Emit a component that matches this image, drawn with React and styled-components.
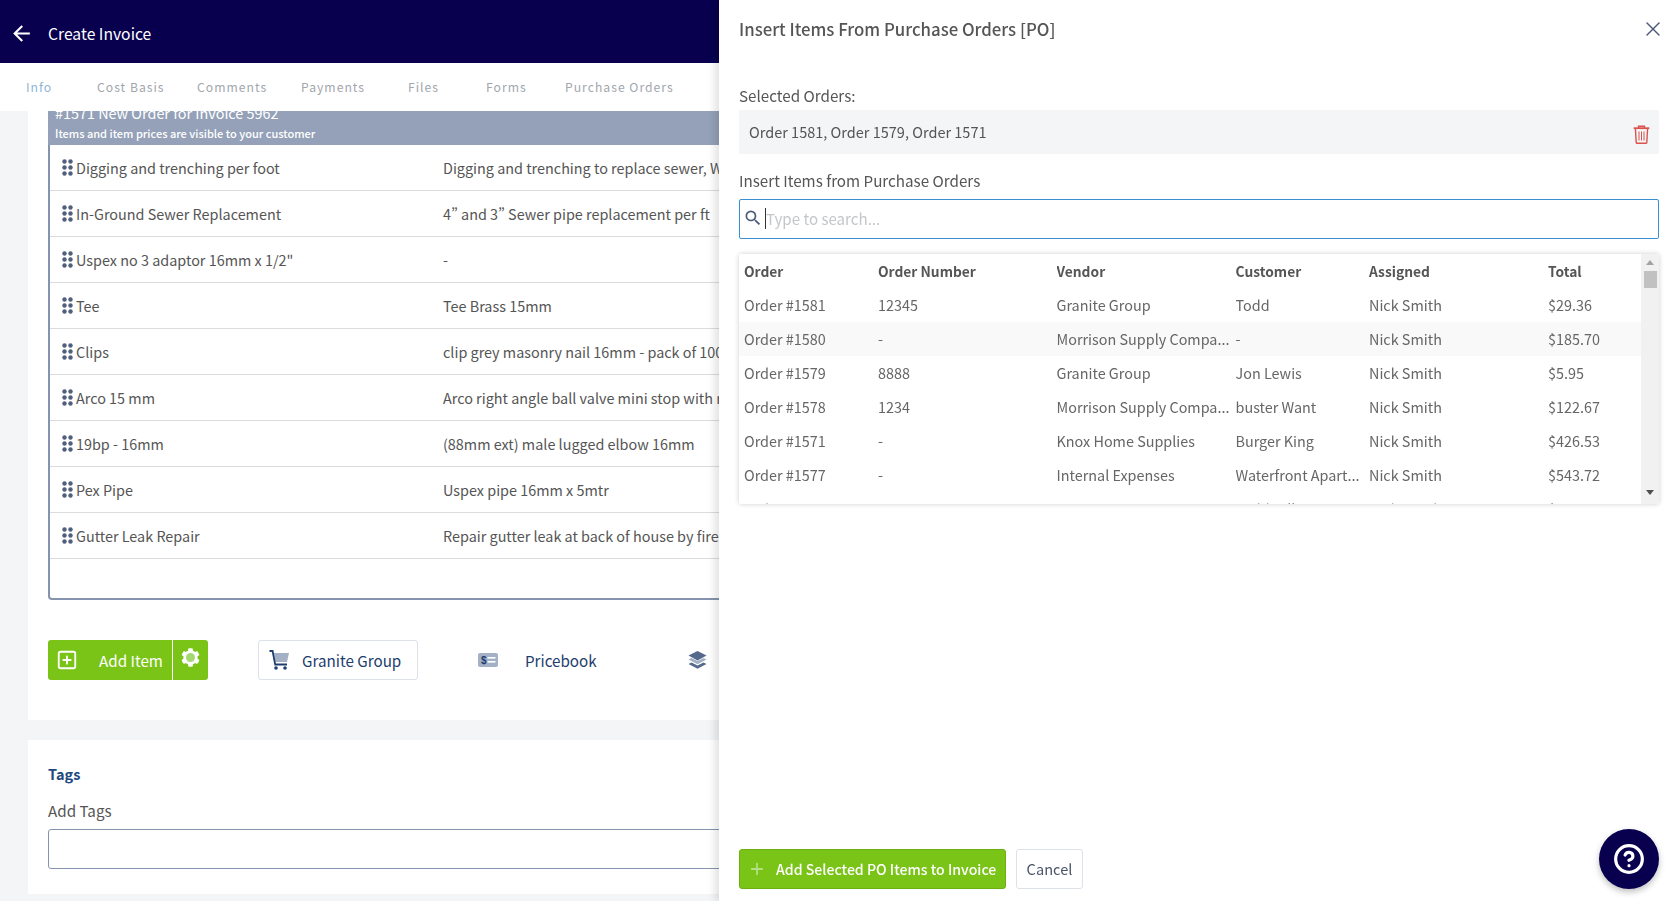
import React from 'react';
import styled, { createGlobalStyle } from 'styled-components';
import { X, CircleHelp, Plus, SquarePlus } from 'lucide-react';
import { FaCog } from 'react-icons/fa';
import { MdArrowBack, MdSearch } from 'react-icons/md';

const GlobalStyle = createGlobalStyle`
    html, body {
        margin: 0;
        height: 100%;
        overflow: hidden;
        background-color: #f4f5f7;
        font-family: "Noto Sans CJK SC", "Source Sans Pro", sans-serif;
        font-feature-settings: "pwid";
        color: #555;
    }
    * { box-sizing: border-box; }
`;

const Page = styled.div`
    height: 901px;
    display: flex;
    flex-direction: column;
    overflow: hidden;
`;

const TopBar = styled.header`
    height: 63px;
    flex: none;
    background-color: #08004e;
    display: flex;
    align-items: center;
    padding: 4px 0 0 9px;
    gap: 14px;
    color: #fff;
    font-size: 15.7px;
    line-height: 24px;
`;

const TabBar = styled.nav`
    height: 48px;
    flex: none;
    background-color: #fff;
    display: flex;
    align-items: center;
    font-size: 12.2px;
    line-height: 18px;
    letter-spacing: 1px;
    position: relative;
    z-index: 1;
`;

const Tab = styled.span`
    width: ${p => p.$w}px;
    padding-left: ${p => p.$pad}px;
    color: ${p => (p.$active ? '#8fb5d6' : '#a2a6ad')};
    white-space: nowrap;
`;

const Main = styled.main`
    flex: 1;
    overflow: hidden;
    padding: 0 0 0 28px;
`;

const Card = styled.section`
    background-color: #fff;
    padding: ${p => p.$pad};
    margin-bottom: 20px;
`;

const ItemsCard = styled(Card)`
    margin-top: -10px;
    height: 619px;
`;

const OrderBox = styled.div`
    width: 700px;
    height: 499px;
    border: solid #8494ae;
    border-width: 0 2px 2px 2px;
    border-radius: 0 0 4px 4px;
`;

const OrderHead = styled.div`
    margin: 0 -2px;
    height: 44px;
    background-color: #94a1b8;
    color: #fff;
    padding: 2px 7px 0;
`;

const OrderTitle = styled.div`
    font-size: 14.4px;
    line-height: 20px;
`;

const OrderNote = styled.div`
    font-size: 11px;
    line-height: 20px;
    font-weight: 500;
`;

const ItemRow = styled.div`
    height: 46px;
    display: grid;
    grid-template-columns: 393px 1fr;
    align-items: center;
    border-bottom: 1px solid #dcdcdc;
    font-size: 14.4px;
    line-height: 20px;
    white-space: nowrap;
    overflow: hidden;
`;

const ItemName = styled.div`
    display: flex;
    align-items: center;
    gap: 3px;
    padding-left: 12px;
`;

const Grip = () => (
    <svg width="11" height="17" viewBox="0 0 11 17" fill="#4f5f7c">
        <circle cx="2.5" cy="2.5" r="2.2" /><circle cx="8.5" cy="2.5" r="2.2" />
        <circle cx="2.5" cy="8.5" r="2.2" /><circle cx="8.5" cy="8.5" r="2.2" />
        <circle cx="2.5" cy="14.5" r="2.2" /><circle cx="8.5" cy="14.5" r="2.2" />
    </svg>
);

const ActionRow = styled.div`
    display: flex;
    align-items: center;
    margin-top: 40px;
    height: 40px;
    white-space: nowrap;
`;

const SplitButton = styled.div`
    width: 160px;
    height: 40px;
    display: flex;
    background-color: #7ac418;
    border-radius: 3px;
    color: #fff;
    font-size: 15.2px;
    line-height: 40px;
`;

const SplitMain = styled.div`
    width: 125px;
    display: flex;
    align-items: center;
    padding-left: 8px;
    gap: 21px;
    border-right: 1px solid #fff;
`;

const SplitGear = styled.div`
    flex: 1;
    position: relative;
    display: flex;
    justify-content: center;
    padding-top: 8px;
    &::after {
        content: '';
        position: absolute;
        left: 13px;
        top: 13px;
        width: 9px;
        height: 9px;
        border-radius: 50%;
        background-color: #a5d86f;
    }
`;

const VendorButton = styled.div`
    margin-left: 50px;
    width: 160px;
    height: 40px;
    border: 1px solid #dde1ea;
    border-radius: 3px;
    display: flex;
    align-items: center;
    padding-left: 10px;
    gap: 13px;
    color: #1d3d6d;
    font-size: 15.2px;
`;

const PlainAction = styled.div`
    margin-left: 60px;
    display: flex;
    align-items: center;
    gap: 27px;
    color: #1d3d6d;
    font-size: 15.2px;
`;

const LayersIcon = styled.div`
    margin-left: 91px;
    display: flex;
`;

const CartIcon = () => (
    <svg width="20" height="20" viewBox="0 0 20 20">
        <path d="M5 3h15l-2 9H6.5z" fill="#a3b0c6" />
        <path d="M0.5 1H3.6L6.2 14.5H18" fill="none" stroke="#1d3d6d" strokeWidth="1.8" />
        <circle cx="7" cy="18" r="1.8" fill="#1d3d6d" />
        <circle cx="16" cy="18" r="1.8" fill="#1d3d6d" />
    </svg>
);

const PriceIcon = () => (
    <svg width="20" height="14" viewBox="0 0 20 14">
        <rect width="20" height="14" rx="2" fill="#a3b0c6" />
        <text x="3" y="11" fontSize="10" fontWeight="700" fill="#1d3d6d" fontFamily="Liberation Sans, sans-serif">$</text>
        <rect x="9.5" y="4" width="8" height="1.6" fill="#fff" />
        <rect x="9.5" y="8" width="8" height="1.6" fill="#fff" />
    </svg>
);

const StackIcon = () => (
    <svg width="19" height="18" viewBox="0 0 19 18">
        <path d="M0.5 13l3-1.6 6 3 6-3 3 1.6-9 4.8z" fill="#55698c" />
        <path d="M0.5 8.5l3-1.6 6 3 6-3 3 1.6-9 4.8z" fill="#a3b0c6" />
        <path d="M9.5 0l9 4.6-9 4.8-9-4.8z" fill="#55698c" />
    </svg>
);

const SectionTitle = styled.div`
    font-size: 14.5px;
    line-height: 22px;
    font-weight: 700;
    color: #1f4a80;
`;

const FieldLabel = styled.div`
    font-size: 15.2px;
    line-height: 22px;
    color: #555;
    margin-top: ${p => p.$top || 0}px;
`;

const TagsInput = styled.div`
    height: 40px;
    margin-top: 8px;
    width: 700px;
    border: 1px solid #8494ae;
    border-radius: 3px;
`;

const TagsCard = styled(Card)`
    height: 154px;
`;

const Drawer = styled.aside`
    position: fixed;
    top: 0;
    right: 0;
    bottom: 0;
    width: 952px;
    background-color: #fff;
    box-shadow: -4px 0 8px rgba(0, 0, 0, 0.12);
    padding: 0 12px 0 20px;
    display: flex;
    flex-direction: column;
    z-index: 2;
`;

const DrawerHead = styled.div`
    height: 61px;
    flex: none;
    display: flex;
    justify-content: space-between;
    padding-top: 16px;
    font-size: 16.8px;
    line-height: 26px;
    font-weight: 500;
    color: #555;
`;

const CloseIcon = styled(X)`
    margin: 1px -6px 0 0;
    color: #4a5a78;
`;

const SelectedBox = styled.div`
    height: 44px;
    margin-top: 4px;
    background-color: #f4f5f7;
    padding: 0 9px 2px 10px;
    display: flex;
    align-items: center;
    justify-content: space-between;
    font-size: 14.5px;
`;

const TrashSvg = styled.svg`
    margin-top: 6px;
`;

const TrashIcon = () => (
    <TrashSvg width="17" height="19" viewBox="0 0 17 19" fill="none" stroke="#d9534f" strokeWidth="1.4">
        <path d="M0.7 3.2h15.6" strokeWidth="1.8" />
        <path d="M5.5 3V1.2h6V3" />
        <path d="M2.4 3.5l.8 14a1 1 0 0 0 1 .8h8.6a1 1 0 0 0 1-.8l.8-14" />
        <path d="M6 6.5v9M8.5 6.5v9M11 6.5v9" strokeWidth="1" />
    </TrashSvg>
);

const SearchBox = styled.div`
    height: 40px;
    margin-top: 8px;
    border: 1px solid #3a8fd0;
    border-radius: 2px;
    display: flex;
    align-items: center;
    padding: 0 0 2px 3px;
    font-size: 15.1px;
    color: #c4c6c9;
`;

const Caret = styled.span`
    width: 1px;
    height: 21px;
    margin: 0 0 0 2px;
    background-color: #333;
`;

const ResultsPanel = styled.div`
    margin-top: 15px;
    height: 250px;
    display: flex;
    box-shadow: 0 0 5px rgba(0, 0, 0, 0.2);
    overflow: hidden;
    border-radius: 2px;
`;

const ResultsBody = styled.div`
    flex: 1;
    min-width: 0;
`;

const ResultRow = styled.div`
    height: 34px;
    display: grid;
    grid-template-columns: 134px 178.5px 179px 133.5px 179px 1fr;
    align-items: center;
    padding: 0 0 1px 5px;
    font-size: ${p => (p.$head ? 13.8 : 14.4)}px;
    line-height: 20px;
    background-color: ${p => (p.$hovered ? '#f9f9f9' : '#fff')};
    font-weight: ${p => (p.$head ? 700 : 400)};
    color: ${p => (p.$head ? '#555' : '#666')};
`;

const Cell = styled.div`
    overflow: hidden;
    white-space: nowrap;
    padding-right: 3px;
`;

const ScrollTrack = styled.div`
    width: 18px;
    flex: none;
    background-color: #f1f1f1;
    display: flex;
    flex-direction: column;
    align-items: center;
    padding-top: 6px;
`;

const ScrollThumb = styled.div`
    width: 13px;
    height: 17px;
    margin-top: 6px;
    background-color: #c1c1c1;
`;

const ScrollArrow = styled.div`
    width: 0;
    height: 0;
    border: 4px solid transparent;
    border-top-width: 0;
    border-bottom: 5px solid ${p => (p.$down ? '#505050' : '#a3a3a3')};
    transform: ${p => (p.$down ? 'rotate(180deg)' : 'none')};
    margin-top: ${p => (p.$down ? 'auto' : '0')};
    margin-bottom: ${p => (p.$down ? '9px' : '0')};
`;

const DrawerFoot = styled.div`
    margin-top: auto;
    padding-bottom: 12px;
    display: flex;
    gap: 10px;
`;

const SubmitButton = styled.div`
    width: 267px;
    height: 40px;
    background-color: #7ac418;
    border: 1px solid #6cb012;
    border-radius: 3px;
    color: #fff;
    font-size: 14.1px;
    font-weight: 500;
    white-space: nowrap;
    display: flex;
    align-items: center;
    padding: 0 0 1px 8px;
    gap: 10px;
`;

const CancelButton = styled.div`
    width: 67px;
    height: 40px;
    background-color: #fff;
    border: 1px solid #dde1ea;
    border-radius: 3px;
    display: flex;
    align-items: center;
    justify-content: center;
    font-size: 14.6px;
    padding-bottom: 1px;
    color: #4a5568;
`;

const HelpButton = styled.div`
    position: fixed;
    right: 12px;
    bottom: 12px;
    width: 60px;
    height: 60px;
    border-radius: 50%;
    background-color: #08004e;
    box-shadow: 0 3px 6px rgba(0, 0, 0, 0.25);
    color: #fff;
    display: flex;
    align-items: center;
    justify-content: center;
    z-index: 3;
`;

const tabs = [
    { label: 'Info', w: 97, pad: 26, active: true },
    { label: 'Cost Basis', w: 100, pad: 0 },
    { label: 'Comments', w: 104, pad: 0 },
    { label: 'Payments', w: 107, pad: 0 },
    { label: 'Files', w: 78, pad: 0 },
    { label: 'Forms', w: 79, pad: 0 },
    { label: 'Purchase Orders', w: 120, pad: 0 },
];

const items = [
    ['Digging and trenching per foot', 'Digging and trenching to replace sewer, Water and drain lines'],
    ['In-Ground Sewer Replacement', '4” and 3” Sewer pipe replacement per ft'],
    ['Uspex no 3 adaptor 16mm x 1/2"', '-'],
    ['Tee', 'Tee Brass 15mm'],
    ['Clips', 'clip grey masonry nail 16mm - pack of 100'],
    ['Arco 15 mm', 'Arco right angle ball valve mini stop with rubber seal'],
    ['19bp - 16mm', '(88mm ext) male lugged elbow 16mm'],
    ['Pex Pipe', 'Uspex pipe 16mm x 5mtr'],
    ['Gutter Leak Repair', 'Repair gutter leak at back of house by fireplace'],
];

const orders = [
    ['Order #1581', '12345', 'Granite Group', 'Todd', 'Nick Smith', '$29.36'],
    ['Order #1580', '-', 'Morrison Supply Compa...', '-', 'Nick Smith', '$185.70'],
    ['Order #1579', '8888', 'Granite Group', 'Jon Lewis', 'Nick Smith', '$5.95'],
    ['Order #1578', '1234', 'Morrison Supply Compa...', 'buster Want', 'Nick Smith', '$122.67'],
    ['Order #1571', '-', 'Knox Home Supplies', 'Burger King', 'Nick Smith', '$426.53'],
    ['Order #1577', '-', 'Internal Expenses', 'Waterfront Apart...', 'Nick Smith', '$543.72'],
    ['Order #1576', '-', 'Granite Group', 'Todd Hill', 'Nick Smith', '$64.10'],
];

const columns = ['Order', 'Order Number', 'Vendor', 'Customer', 'Assigned', 'Total'];

const App = () => {
    return (
        <>
            <GlobalStyle />
            <Page>
                <TopBar>
                    <MdArrowBack size={25} />
                    Create Invoice
                </TopBar>
                <TabBar>
                    {tabs.map(t => (
                        <Tab key={t.label} $w={t.w} $pad={t.pad} $active={t.active}>{t.label}</Tab>
                    ))}
                </TabBar>
                <Main>
                    <ItemsCard $pad="0 0 0 20px">
                        <OrderBox>
                            <OrderHead>
                                <OrderTitle>#1571 New Order for Invoice 5962</OrderTitle>
                                <OrderNote>Items and item prices are visible to your customer</OrderNote>
                            </OrderHead>
                            {items.map(([name, desc]) => (
                                <ItemRow key={name}>
                                    <ItemName><Grip />{name}</ItemName>
                                    <div>{desc}</div>
                                </ItemRow>
                            ))}
                        </OrderBox>
                        <ActionRow>
                            <SplitButton>
                                <SplitMain><SquarePlus size={22} strokeWidth={2} />Add Item</SplitMain>
                                <SplitGear><FaCog size={19} /></SplitGear>
                            </SplitButton>
                            <VendorButton><CartIcon />Granite Group</VendorButton>
                            <PlainAction><PriceIcon />Pricebook</PlainAction>
                            <LayersIcon><StackIcon /></LayersIcon>
                        </ActionRow>
                    </ItemsCard>
                    <TagsCard $pad="23px 0 0 20px">
                        <SectionTitle>Tags</SectionTitle>
                        <FieldLabel $top={14}>Add Tags</FieldLabel>
                        <TagsInput />
                    </TagsCard>
                </Main>
            </Page>
            <Drawer>
                <DrawerHead>
                    Insert Items From Purchase Orders [PO]
                    <CloseIcon size={24} strokeWidth={1.4} />
                </DrawerHead>
                <FieldLabel $top={23}>Selected Orders:</FieldLabel>
                <SelectedBox>
                    Order 1581, Order 1579, Order 1571
                    <TrashIcon />
                </SelectedBox>
                <FieldLabel $top={15}>Insert Items from Purchase Orders</FieldLabel>
                <SearchBox>
                    <MdSearch size={20} color="#4a5a78" />
                    <Caret />
                    Type to search...
                </SearchBox>
                <ResultsPanel>
                    <ResultsBody>
                        <ResultRow $head>
                            {columns.map(c => <Cell key={c}>{c}</Cell>)}
                        </ResultRow>
                        {orders.map(row => (
                            <ResultRow key={row[0]} $hovered={row[0] === 'Order #1580'}>
                                {row.map((c, j) => <Cell key={j}>{c}</Cell>)}
                            </ResultRow>
                        ))}
                    </ResultsBody>
                    <ScrollTrack>
                        <ScrollArrow />
                        <ScrollThumb />
                        <ScrollArrow $down />
                    </ScrollTrack>
                </ResultsPanel>
                <DrawerFoot>
                    <SubmitButton>
                        <Plus size={18} strokeWidth={2.4} color="#b5df85" />
                        Add Selected PO Items to Invoice
                    </SubmitButton>
                    <CancelButton>Cancel</CancelButton>
                </DrawerFoot>
            </Drawer>
            <HelpButton><CircleHelp size={32} strokeWidth={2.4} /></HelpButton>
        </>
    );
};

export default App;
